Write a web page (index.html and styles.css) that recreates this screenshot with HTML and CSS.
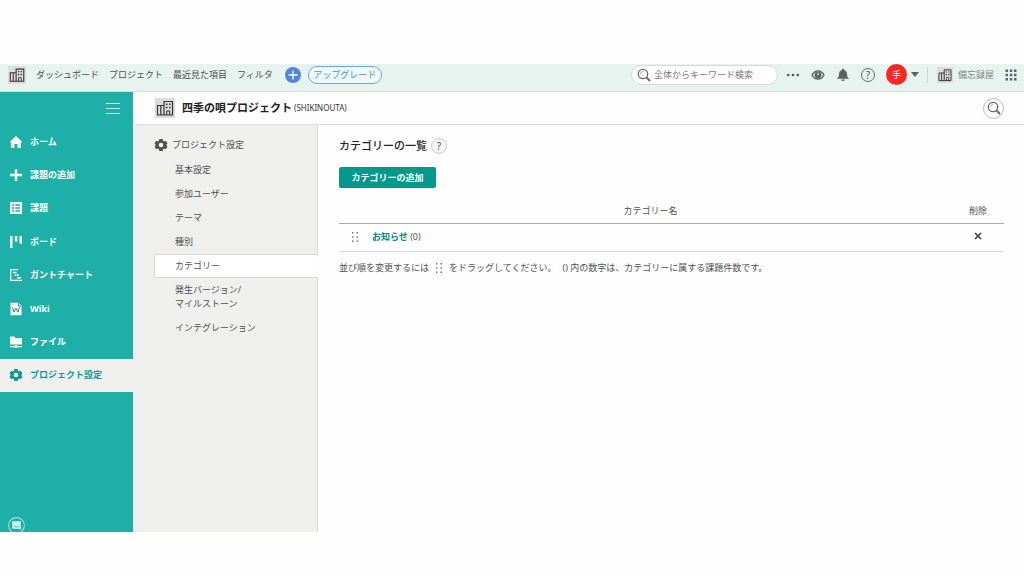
FILE: index.html
```html
<!DOCTYPE html>
<html lang="ja">
<head>
<meta charset="utf-8">
<title>カテゴリーの一覧</title>
<link rel="stylesheet" href="styles.css">
</head>
<body>
<svg class="defs" aria-hidden="true">
  <symbol id="building" viewBox="0 0 20 20">
    <rect width="20" height="20" fill="#dcdddc"/>
    <path d="M9 17V3.500h8.500V17zM9 7.500H2.500V17H9M5.800 7.500V17" fill="none" stroke="#333" stroke-width="1.200"/>
    <path d="M11 5.500h1.500V7H11zM14 5.500h1.500V7H14zM11 8.700h1.500v1.500H11zM14 8.700h1.500v1.500H14z" fill="#333"/>
    <path d="M11.700 17v-4h3v4" fill="none" stroke="#333"/>
  </symbol>
  <symbol id="search" viewBox="0 0 14 14">
    <circle cx="6" cy="6" r="4.700" fill="none" stroke="#666" stroke-width="1.300"/>
    <path d="M9.400 9.400L13 13" stroke="#666" stroke-width="2"/>
    <path d="M3.500 6A2.500 2.500 0 0 1 6 3.500" fill="none" stroke="#999" stroke-width=".8"/>
  </symbol>
  <symbol id="gear" viewBox="0 0 14 14">
    <path fill-rule="evenodd" d="M5.300 1h3.400l.4 1.800 1 .6 1.800-.6 1.600 2.800L12.200 7l1.300 1.400-1.600 2.800-1.800-.6-1 .6-.4 1.800H5.300l-.4-1.800-1-.6-1.800.6L.5 8.400 1.800 7 .5 5.600l1.600-2.800 1.800.6 1-.6zM7 4.700a2.300 2.300 0 1 0 0 4.600 2.300 2.300 0 0 0 0-4.600z" fill="currentColor"/>
  </symbol>
  <symbol id="grip" viewBox="0 0 8 12">
    <path d="M1 1h1.500v1.500H1zM5.500 1H7v1.500H5.500zM1 5.200h1.500v1.500H1zM5.500 5.200H7v1.500H5.500zM1 9.400h1.500v1.500H1zM5.500 9.400H7v1.500H5.500z" fill="#777"/>
  </symbol>
</svg>

<div class="app">
  <header class="topbar">
    <a class="logo" href="#" aria-label="スペース"><svg class="i18"><use href="#building"/></svg></a>
    <nav class="topnav">
      <a href="#">ダッシュボード</a>
      <a href="#">プロジェクト</a>
      <a href="#">最近見た項目</a>
      <a href="#">フィルタ</a>
    </nav>
    <button class="plus" aria-label="追加"><svg viewBox="0 0 16 16"><circle cx="8" cy="8" r="8" fill="#5286d9"/><path d="M8 3.500v9M3.500 8h9" stroke="#fff" stroke-width="1.300"/></svg></button>
    <a class="upgrade" href="#">アップグレード</a>
    <label class="search">
      <svg class="i14"><use href="#search"/></svg>
      <input type="text" placeholder="全体からキーワード検索" aria-label="全体からキーワード検索">
    </label>
    <div class="tools">
      <button aria-label="その他"><svg class="i14" viewBox="0 0 14 14" fill="#555"><circle cx="2.200" cy="7" r="1.300"/><circle cx="7" cy="7" r="1.300"/><circle cx="11.800" cy="7" r="1.300"/></svg></button>
      <button aria-label="ウォッチ"><svg class="i14" viewBox="0 0 14 14"><path d="M1 7c1.500-3 3.700-4.200 6-4.200S11.500 4 13 7c-1.500 3-3.700 4.200-6 4.200S2.500 10 1 7z" fill="#d5dcda" stroke="#5c6260" stroke-width="1.300"/><circle cx="7" cy="7" r="3.400" fill="#5c6260"/><path d="M6.400 4.800h1.200v2.500H6.400z" fill="#e8f2ef"/></svg></button>
      <button aria-label="お知らせ"><svg class="i14" viewBox="0 0 14 14" fill="#5c6260"><path d="M7 .8c.8 0 1.200.5 1.200 1.200C10.300 2.700 11 4.300 11 6.500c0 2 .8 3 2.200 4.300H.8C2.200 9.500 3 8.500 3 6.500c0-2.200.7-3.800 2.800-4.500C5.800 1.300 6.200.8 7 .8zM5.300 11.600h3.400c-.2 1-.9 1.500-1.700 1.500s-1.500-.5-1.700-1.500z"/></svg></button>
      <button class="help" aria-label="ヘルプ">?</button>
      <button class="user" aria-label="ユーザー"><span class="avatar">手</span><svg viewBox="0 0 8 5"><path d="M0 0h8L4 5z" fill="#5c6260"/></svg></button>
    </div>
    <a class="space" href="#"><svg class="i16"><use href="#building"/></svg>備忘録屋</a>
    <button class="apps" aria-label="アプリ"><svg class="i12" viewBox="0 0 12 12" fill="#5b6572"><path d="M.5.500h2.500V3H.5zM4.800.500h2.500V3H4.800zM9 .5h2.500V3H9zM.5 4.800h2.500v2.500H.5zM4.800 4.800h2.500v2.500H4.800zM9 4.800h2.500v2.500H9zM.5 9h2.500v2.500H.5zM4.800 9h2.500v2.500H4.800zM9 9h2.500v2.500H9z"/></svg></button>
  </header>

  <div class="body">
    <aside class="sidebar">
      <button class="burger" aria-label="メニュー"><svg class="i14" viewBox="0 0 14 14"><path d="M0 1.500h14M0 6.500h14M0 11.500h14" stroke="#b9f0ea"/></svg></button>
      <nav class="menu">
        <a href="#"><svg class="i14" viewBox="0 0 14 14" fill="currentColor"><path d="M7 1l6.500 6.200h-1.700V13H8.500V9h-3v4H2.200V7.200H.5z"/></svg>ホーム</a>
        <a href="#"><svg class="i14" viewBox="0 0 14 14"><path d="M7 1v12M1 7h12" stroke="currentColor" stroke-width="2.400"/></svg>課題の追加</a>
        <a href="#"><svg class="i14" viewBox="0 0 14 14"><path d="M1 1h12v12H1z" fill="currentColor"/><path d="M3 4h2M6.300 4H11M3 7h2M6.300 7H11M3 10h2M6.300 10H11" stroke="#1eafa8" stroke-width="1.300"/></svg>課題</a>
        <a href="#"><svg class="i14" viewBox="0 0 14 14" fill="currentColor"><path d="M1 1h2.500v12H1zM5.800 1h2.500v5.500H5.800zM10.500 1H13v7.500h-2.500z"/></svg>ボード</a>
        <a href="#"><svg class="i14" viewBox="0 0 14 14"><path d="M9 1.700H1.700v10.600H13M4 4.500h3.500M5.500 7.200H10M8 9.800h4" stroke="currentColor" stroke-width="1.300" fill="none"/></svg>ガントチャート</a>
        <a href="#"><svg class="i14" viewBox="0 0 14 14"><path d="M1.500.8h8l3 3v9.500h-11z" fill="currentColor"/><path d="M3.500 5.200l1.500 5L7 6l2 4.200 1.500-5M9.300 1v3h3" fill="none" stroke="#1a8f8a"/></svg>Wiki</a>
        <a href="#"><svg class="i14" viewBox="0 0 14 14" fill="currentColor"><path d="M1 1.500h4.500l1 1.500H13v6.500H1zM1 11h4.500v1.200H1zM8.500 11H13v1.200H8.500z"/><circle cx="7" cy="11.500" r="1.500"/></svg>ファイル</a>
        <a class="active" href="#" aria-current="page"><svg class="i14"><use href="#gear"/></svg>プロジェクト設定</a>
      </nav>
      <button class="chat" aria-label="チャット"><svg viewBox="0 0 16 16"><circle cx="8" cy="8" r="7.400" fill="none" stroke="#a5e3de"/><path d="M4 4h8v8l-2-1H4z" fill="#d3f5f1"/><path d="M5.500 8.500c1.500 1.200 3.500 1.200 5 0" fill="none" stroke="#1eafa8" stroke-width=".8"/></svg></button>
    </aside>

    <div class="project">
      <div class="project-head">
        <svg class="i20"><use href="#building"/></svg>
        <strong>四季の唄プロジェクト</strong>
        <span>(SHIKINOUTA)</span>
        <button class="round-search" aria-label="検索"><svg class="i14"><use href="#search"/></svg></button>
      </div>
      <div class="columns">
        <nav class="subnav">
          <h2><svg class="i14"><use href="#gear"/></svg>プロジェクト設定</h2>
          <a href="#">基本設定</a>
          <a href="#">参加ユーザー</a>
          <a href="#">テーマ</a>
          <a href="#">種別</a>
          <a class="active" href="#" aria-current="page">カテゴリー</a>
          <a href="#">発生バージョン/<br>マイルストーン</a>
          <a href="#">インテグレーション</a>
        </nav>
        <main>
          <div class="title"><h1>カテゴリーの一覧</h1><button class="help" aria-label="ヘルプ">?</button></div>
          <button class="add">カテゴリーの追加</button>
          <table>
            <thead><tr><th class="name">カテゴリー名</th><th class="del">削除</th></tr></thead>
            <tbody><tr>
              <td><div class="item"><svg class="grip"><use href="#grip"/></svg><span><a href="#">お知らせ</a> (0)</span></div></td>
              <td class="del"><button aria-label="削除"><svg viewBox="0 0 8 8"><path d="M1 1l6 6M7 1L1 7" stroke="#444" stroke-width="1.700"/></svg></button></td>
            </tr></tbody>
          </table>
          <p class="note"><span>並び順を変更するには</span><svg class="grip"><use href="#grip"/></svg><span>をドラッグしてください。</span><span>() 内の数字は、カテゴリーに属する課題件数です。</span></p>
        </main>
      </div>
    </div>
  </div>
</div>
</body>
</html>
```
FILE: styles.css
```css
* { box-sizing: border-box; }
body {
  margin: 0;
  min-height: 100vh;
  padding: 64px 0 44px;
  display: flex;
  background: #fefefe;
  color: #505050;
  font: 9px/14px "Noto Sans", "Noto Sans CJK JP", sans-serif;
}
a { color: inherit; text-decoration: none; }
button { margin: 0; padding: 0; border: 0; background: none; font: inherit; color: inherit; cursor: pointer; }
svg { display: block; flex: none; }
h1, h2, p { margin: 0; }
.defs { position: absolute; width: 0; height: 0; }
.i12 { width: 12px; height: 12px; }
.i14 { width: 14px; height: 14px; }
.i16 { width: 16px; height: 16px; }
.i18 { width: 18px; height: 18px; }
.i20 { width: 20px; height: 20px; }

.app { flex: 1; display: flex; flex-direction: column; min-width: 0; }

.topbar {
  display: flex;
  align-items: center;
  height: 28px;
  padding: 0 7px 6px 8px;
  background: #e7f3ef;
  border-bottom: 1px solid #d5dedb;
  white-space: nowrap;
}
.topnav { display: flex; gap: 10px; margin-left: 10px; }
.plus { margin-left: 12px; }
.plus svg { width: 16px; height: 16px; }
.upgrade {
  display: flex;
  justify-content: center;
  width: 74px;
  margin-left: 7px;
  border: 1px solid #6ea6e4;
  border-radius: 9px;
  background: #f1f8f8;
  color: #4a93dd;
  line-height: 16px;
}
.search {
  display: flex;
  align-items: center;
  gap: 3px;
  width: 147px;
  height: 20px;
  margin-left: auto;
  padding: 0 5px;
  border: 1px solid #d3dad8;
  border-radius: 10px;
  background: #fff;
}
.search input { flex: 1; min-width: 0; padding: 0; border: 0; outline: 0; background: none; font: inherit; }
.search input::placeholder { color: #777; opacity: 1; }
.tools { display: flex; align-items: center; gap: 11px; margin-left: 8px; }
.help {
  width: 14px;
  height: 14px;
  border: 1px solid #666;
  border-radius: 50%;
  font-size: 10px;
  line-height: 12px;
  text-align: center;
}
.user { display: flex; align-items: center; gap: 4px; }
.user svg { width: 8px; height: 5px; }
.avatar { width: 21px; height: 21px; border-radius: 50%; background: #fb2725; color: #fff; line-height: 21px; }
.space { display: flex; align-items: center; gap: 5px; margin-left: 8px; padding-left: 9px; border-left: 1px solid #ccd6d3; color: #858585; }
.apps { margin-left: 11px; }

.body { flex: 1; display: flex; }
.sidebar { width: 133px; flex: none; display: flex; flex-direction: column; background: #1eafa8; color: #fff; }
.burger { height: 33px; padding: 0 13px 0 12px; align-self: flex-end; }
.menu { display: flex; flex-direction: column; height: 267px; }
.menu a { flex: 1; display: flex; align-items: center; gap: 7px; padding-left: 9px; font-weight: 700; }
.menu .active { background: #efefee; color: #12988e; }
.chat { height: 15px; margin: auto 0 0 8px; overflow: hidden; }
.chat svg { width: 17px; height: 17px; }

.project { flex: 1; min-width: 0; display: flex; flex-direction: column; }
.project-head {
  display: flex;
  align-items: center;
  height: 33px;
  padding: 0 20px 0 22px;
  border-bottom: 1px solid #ddd;
  color: #333;
}
.project-head strong { margin: 0 2px 0 7px; font-size: 11px; font-weight: 600; color: #222; }
.project-head span { font-size: 8px; }
.round-search { display: grid; place-items: center; width: 21px; height: 21px; margin-left: auto; border: 1px solid #bbb; border-radius: 50%; }

.columns { flex: 1; display: flex; }
.subnav { width: 185px; flex: none; padding: 13px 0 0 21px; background: #efefee; border-right: 1px solid #d8d8d8; }
.subnav h2 { display: flex; align-items: center; gap: 4px; margin-bottom: 6px; font-size: 9px; font-weight: 400; }
.subnav a { display: block; margin-right: -1px; padding: 4px 0 4px 20px; border: 1px solid transparent; border-right: 0; line-height: 14px; }
.subnav .active { background: #fff; border-color: #d8d8d8; border-radius: 2px 0 0 2px; }

main { flex: 1; min-width: 0; padding: 13px 20px 0 21px; }
.title { display: flex; align-items: center; gap: 4px; }
.title h1 { font-size: 11px; line-height: 16px; color: #222; font-weight: 500; }
.title .help { width: 16px; height: 16px; line-height: 14px; border-color: #ccc; background: #f4f4f4; }
.add { display: block; width: 97px; height: 21px; margin-top: 13px; border-radius: 2px; background: #04998b; color: #fff; font-weight: 700; }
table { width: 100%; margin-top: 12px; border-collapse: collapse; }
th { height: 23px; padding: 0; border-bottom: 1px solid #aaa; font-weight: 400; }
td { height: 28px; padding: 0; border-bottom: 1px solid #ddd; }
.name { padding-left: 10px; }
.del { width: 52px; text-align: center; }
.del svg { width: 8px; height: 8px; }
.item { display: flex; align-items: center; gap: 13px; padding-left: 12px; }
.item a { color: #078779; font-weight: 700; }
.grip { width: 8px; height: 12px; }
.note { display: flex; align-items: center; gap: 6px; margin-top: 9px; }
```
